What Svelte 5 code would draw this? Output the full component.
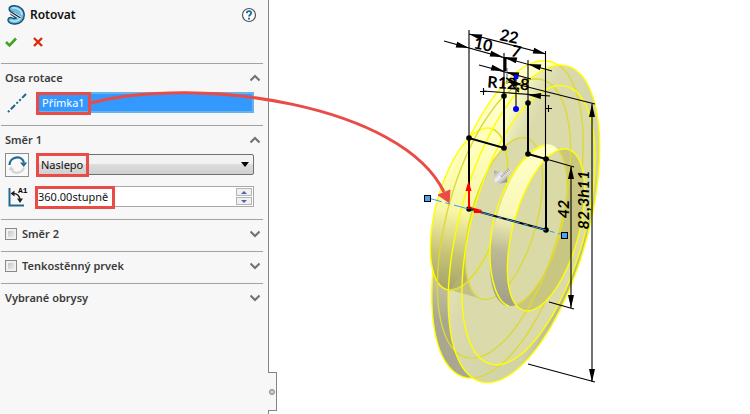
<script lang="ts">
    type Point = [number, number];

    let axisOpen = $state(true);
    let directionOpen = $state(true);
    let axisName = $state("Přímka1");
    let endCondition = $state("Naslepo");
    let angle = $state("360.00stupně");
    let secondDirection = $state(false);
    let thinFeature = $state(false);

    // point on the revolved part: a = distance along the axis, r = radius
    function project(a: number, r: number, t: number): Point {
        return [
            469 + 3.5 * a + 1.84 * r * Math.cos(t),
            209 + 0.95 * a - 1.857 * r * Math.cos(t) + 3.38 * r * Math.sin(t)
        ];
    }

    function ring(a: number, r: number) {
        const points: string[] = [];
        for (let i = 0; i < 120; i++) {
            const [x, y] = project(a, r, (i * Math.PI) / 60);
            points.push(`${x.toFixed(1)} ${y.toFixed(1)}`);
        }
        return "M" + points.join("L") + "Z";
    }

    const hubBack = ring(0, 21);
    const hubBackEnd = ring(10, 21);
    const rimBack = ring(11, 41.15);
    const rimFront = ring(15.7, 41.15);
    const discBack = ring(10, 36.2);
    const discFront = ring(17, 36.2);
    const hubFrontStart = ring(17, 21);
    const hubFront = ring(22, 21);

    const vertices: Point[] = [
        [504, 96], [528, 103], [469, 138], [504, 148],
        [528, 154], [546, 159], [546, 230], [469, 209]
    ];

    // tip x, tip y, direction in degrees
    const heads = [
        [469, 34, 195], [546, 54, 15],
        [469, 48, 15], [503, 57, 15], [504, 57, 195], [528, 64, 195],
        [504, 71, 15], [506, 72, 195], [528, 95, 184],
        [571, 166, -90], [571, 308, 90], [592, 104, -90], [592, 382, 90]
    ];
</script>

{#snippet chevron(open: boolean)}
    <svg class="chevron" viewBox="0 0 12 8" aria-hidden="true">
        <path d={open ? "M1.5 6.5 6 2l4.5 4.5" : "M1.5 1.5 6 6l4.5-4.5"} />
    </svg>
{/snippet}

<div class="app">
    <aside class="panel">
        <header>
            <svg class="logo" viewBox="0 0 20 20" aria-hidden="true">
                <path d="M3.2 4.5C2.6 2 5.3.8 8.3.8 14 .8 18.3 4.8 18.2 10.2c0 5.200-4 8.600-9 8.800-3.400.2-7-1.400-7.200-3.800-.1-2 1.800-3.200 3.800-2.300 1.600.700 3 .9 4.300.1L4.800 9.300C5 8 6 7.300 7.200 7.500 5.200 7.100 3.500 6 3.200 4.500Z" fill="#6db9df" stroke="#164f70" stroke-width="1.400" />
                <path d="M6 3c5-.8 9.800 2.200 10 7M4.500 15.300c4 1.800 8 .5 10-2.300" fill="none" stroke="#b5e4f7" stroke-width="1.600" />
                <path d="m4.800 7.400 10 5.800" stroke="#fff" stroke-width="2.600" />
                <path d="m5 7 9.500 6" stroke="#222" stroke-width="1.400" />
            </svg>
            <h1>Rotovat</h1>
            <button class="help" aria-label="Nápověda">
                <svg viewBox="0 0 16 16">
                    <circle cx="8" cy="8" r="6.500" fill="#fff" stroke="#4a5560" stroke-width="1.200" />
                    <path d="M5.800 6.200C5.800 3.300 10.200 3.400 10.200 6c0 1.700-2.200 1.700-2.200 3.600" fill="none" stroke="#1b6c99" stroke-width="1.800" />
                    <path d="M7 10.700h2v1.800H7z" fill="#1b6c99" />
                </svg>
            </button>
        </header>
        <div class="actions">
            <button aria-label="OK">
                <svg viewBox="0 0 12 12"><path d="m1 6 3.500 3.500L11 2.500" fill="none" stroke="#3fa51f" stroke-width="2.600" /></svg>
            </button>
            <button aria-label="Storno">
                <svg viewBox="0 0 12 12"><path d="m2 2 8 8M10 2l-8 8" fill="none" stroke="#d62d0a" stroke-width="2.400" /></svg>
            </button>
        </div>

        <section>
            <button class="heading" onclick={() => (axisOpen = !axisOpen)}>
                <span>Osa rotace</span>{@render chevron(axisOpen)}
            </button>
            {#if axisOpen}
                <div class="fields">
                    <div class="row">
                        <label class="icon" for="axis" aria-label="Osa rotace">
                            <svg viewBox="0 0 24 24"><path d="M3 21 21 3" stroke="#1c6689" stroke-width="2" stroke-dasharray="2 2 6 2 2 2" /></svg>
                        </label>
                        <input id="axis" class="axis" bind:value={axisName} />
                    </div>
                </div>
            {/if}
        </section>

        <section>
            <button class="heading" onclick={() => (directionOpen = !directionOpen)}>
                <span>Směr 1</span>{@render chevron(directionOpen)}
            </button>
            {#if directionOpen}
                <div class="fields">
                    <div class="row">
                        <button class="icon reverse" aria-label="Opačný směr">
                            <svg viewBox="0 0 22 22">
                                <path d="M3.500 11C3.500 2.500 15.500.5 18 8.500" fill="none" stroke="#236b91" stroke-width="2.200" />
                                <path d="M14 8.500h7.200L17.700 13Z" fill="#236b91" />
                                <path d="M18 13.500c-2 6-9.500 7-12.500 2.500" fill="none" stroke="#d4d4d4" stroke-width="2.200" />
                                <path d="M2.500 16h6L4.800 12Z" fill="#d4d4d4" />
                            </svg>
                        </button>
                        <div class="combo">
                            <select bind:value={endCondition} aria-label="Typ rotace">
                                <option>Naslepo</option>
                                <option>Do vrcholu</option>
                                <option>Do povrchu</option>
                            </select>
                            <svg viewBox="0 0 8 5" aria-hidden="true"><path d="M0 0h8L4 5Z" /></svg>
                        </div>
                    </div>
                    <div class="row">
                        <label class="icon" for="angle" aria-label="Úhel">
                            <svg viewBox="0 0 24 24">
                                <path d="M4.500 3v17.500H19" fill="none" stroke="#226a8c" stroke-width="2" />
                                <path d="M7 8.500c5-.5 8 2 8 7.500" fill="none" stroke="#222" stroke-width="1.600" />
                                <path d="m5.500 8.500 4-3v6ZM12 13.500h6L15 18Z" fill="#222" />
                                <text x="13" y="8">A1</text>
                            </svg>
                        </label>
                        <div class="spin">
                            <input id="angle" bind:value={angle} />
                            <div class="steps">
                                <button aria-label="Zvýšit"><svg viewBox="0 0 6 3"><path d="M0 3h6L3 0Z" /></svg></button>
                                <button aria-label="Snížit"><svg viewBox="0 0 6 3"><path d="M0 0h6L3 3Z" /></svg></button>
                            </div>
                        </div>
                    </div>
                </div>
            {/if}
        </section>

        <section>
            <div class="heading">
                <label><input type="checkbox" bind:checked={secondDirection} />Směr 2</label>
                {@render chevron(false)}
            </div>
        </section>
        <section>
            <div class="heading">
                <label><input type="checkbox" bind:checked={thinFeature} />Tenkostěnný prvek</label>
                {@render chevron(false)}
            </div>
        </section>
        <section>
            <button class="heading"><span>Vybrané obrysy</span>{@render chevron(false)}</button>
        </section>

        <button class="handle" aria-label="Skrýt panel"><i></i></button>
    </aside>

    <main></main>

    <svg class="scene" width="750" height="414" viewBox="0 0 750 414">
        <defs>
            <linearGradient id="side" gradientUnits="userSpaceOnUse" x1="500" y1="60" x2="455" y2="370">
                <stop offset="0" stop-color="#ffffd0" />
                <stop offset="0.400" stop-color="#ffffb8" />
                <stop offset="0.580" stop-color="#dfdd9c" />
                <stop offset="0.720" stop-color="#c6c4a2" />
                <stop offset="0.850" stop-color="#a9a78f" />
            </linearGradient>
            <linearGradient id="rim" gradientUnits="userSpaceOnUse" x1="450" y1="200" x2="590" y2="260">
                <stop offset="0" stop-color="#f0f0c0" />
                <stop offset="0.350" stop-color="#dadaae" />
                <stop offset="0.850" stop-color="#d2d2a8" />
                <stop offset="1" stop-color="#a9a78c" />
            </linearGradient>
            <linearGradient id="glow" gradientUnits="userSpaceOnUse" x1="475" y1="100" x2="545" y2="130">
                <stop offset="0" stop-color="#ffffc0" />
                <stop offset="0.500" stop-color="#fbfbc6" stop-opacity="0.900" />
                <stop offset="0.900" stop-color="#dadaae" stop-opacity="0" />
            </linearGradient>
            <linearGradient id="glowFade" x1="0" y1="0" x2="0" y2="1">
                <stop offset="0.250" stop-color="#fff" />
                <stop offset="0.480" stop-color="#000" />
            </linearGradient>
            <linearGradient id="hub" gradientUnits="userSpaceOnUse" x1="470" y1="150" x2="450" y2="290">
                <stop offset="0" stop-color="#ffffba" stop-opacity="0.800" />
                <stop offset="0.450" stop-color="#f8f6a4" />
                <stop offset="0.750" stop-color="#c6c376" />
                <stop offset="1" stop-color="#a5a36a" />
            </linearGradient>
            <linearGradient id="boss" gradientUnits="userSpaceOnUse" x1="540" y1="150" x2="505" y2="300">
                <stop offset="0" stop-color="#ffffc8" />
                <stop offset="0.450" stop-color="#faf8b8" />
                <stop offset="0.700" stop-color="#bcb994" />
                <stop offset="1" stop-color="#a3a18a" />
            </linearGradient>
            <linearGradient id="grip" x1="0" y1="0" x2="1" y2="1">
                <stop offset="0" stop-color="#9a9a9a" />
                <stop offset="0.450" stop-color="#f2f2f2" />
                <stop offset="1" stop-color="#777" />
            </linearGradient>
            <mask id="upper"><path d={rimFront} fill="url(#glowFade)" /></mask>
            <clipPath id="inRim"><path d={rimFront} /></clipPath>
            <clipPath id="inBoss"><path d={hubFront} /></clipPath>
        </defs>

        <path d={rimBack} fill="url(#side)" class="outline" />
        <path d={rimFront} fill="url(#rim)" />
        <path d={discFront} fill="#dadaab" />
        <path d={rimFront} fill="url(#glow)" mask="url(#upper)" />
        <path d={hubBack} fill="url(#hub)" />
        <path d="M450 290 486 300 504 280 475 255Z" fill="#b8b57c" opacity="0.700" />
        <path d={hubBackEnd} fill="#dadaab" />
        <path class="edge" d={hubBack} />
        <g class="edge hidden">
            <path d={hubBackEnd} />
            <path d={discBack} />
        </g>
        <g class="edge hidden" clip-path="url(#inRim)">
            <path d={hubBack} />
            <path d={rimBack} />
        </g>
        <path d={hubFrontStart} fill="url(#boss)" />
        <path d={hubFront} fill="#c9c681" />
        <path d={hubFrontStart} fill="#dadaa6" clip-path="url(#inBoss)" />
        <g class="edge hidden" clip-path="url(#inBoss)">
            <path d={hubFrontStart} />
            <path d={hubBackEnd} />
            <path d={discBack} />
        </g>
        <g class="edge">
            <path d={rimFront} />
            <path d={discFront} />
            <path d="M509 306C497 303 489 278 490 247 492 202 519 151 546 145" />
            <path d={hubFront} />
        </g>

        <g class="thin">
            <path d="M469 30V138M504 53V96M528 60V103M545.500 51V159M516 77V109" />
            <path d="M469 34 546 54M444 41 552 71M479 65 531 79M483 91 550 96" />
            <path d="M508 82 595 104M592 104V382M528 364 595 382" />
            <path d="M546 159 574 167M571 167V308M549 302 574 309" />
            <path d="M507 68V84" stroke="#777" />
            <path d="M480 91.500h7M483.500 88v7M545 108.500h7M548.500 105v7" />
            <path d="M505 57V71" stroke-width="3" />
            <path d="m506 78 9 4 5 2-7 2 6 6" fill="#000" />
        </g>
        {#each heads as [x, y, angle]}
            <path d="M0 0-13-3V3Z" transform="translate({x} {y}) rotate({angle})" />
        {/each}
        <path class="profile" d="M504 96V148L469 138V209L546 230V159L528 154V103" />
        {#each vertices as [x, y]}
            <circle cx={x} cy={y} r="2.800" />
        {/each}
        <circle cx="516" cy="77" r="2.500" fill="#00f" />
        <circle cx="516" cy="109" r="3" fill="#00f" />

        <g class="dims">
            <text transform="translate(508 42) rotate(12)">22</text>
            <text transform="translate(482 50) rotate(12)">10</text>
            <text transform="translate(515 57) rotate(12)">7</text>
            <text transform="translate(508 89) rotate(4)">R12,8</text>
            <g class="slanted">
                <text transform="translate(569 209) rotate(-90)">42</text>
                <text transform="translate(589 200) rotate(-90)">82,3h11</text>
            </g>
        </g>

        <path d="M428 198 564 235" stroke="#3d98ea" stroke-dasharray="14 4 5 4" fill="none" />
        <g fill="#4ba3f2" stroke="#000">
            <rect x="424.500" y="195.500" width="6" height="6" />
            <rect x="561.500" y="232.500" width="6" height="6" />
        </g>
        <g fill="#f00">
            <path d="M468 209V190h2v19ZM468.500 181l3 10h-6ZM469 208l12 3 1-1-12-3ZM483 213l-9-5v5Z" />
        </g>
        <!-- drag handle -->
        <path d="m494 170.500 7 1.500 6 2v8l-6 1.500-6-1Z" fill="url(#grip)" />
        <path d="m494.500 178 6-.5 8.500-9 2.500 1-7 10.500-4 2.500Z" fill="url(#grip)" />
        <path d="m501 176.500 9-8" stroke="#999" stroke-width="2.500" stroke-dasharray="1 1" />

        <g class="callouts">
            <rect x="37.500" y="93.500" width="52" height="20" />
            <rect x="37.500" y="154.500" width="50" height="21" />
            <rect x="36.500" y="187.500" width="77" height="20" />
            <path d="M91 103C200 75 402 105 444 192" />
            <path class="tip" d="m438 195 12-5-1 12.500Z" />
        </g>
    </svg>
</div>

<style>
    :global(body) {
        margin: 0;
        background: #fff;
    }

    .app {
        position: relative;
        display: flex;
        min-height: 100vh;
        overflow: hidden;
        font: 11px/16px "Noto Sans", "Open Sans", sans-serif;
        color: #111;
    }

    .panel {
        position: relative;
        box-sizing: border-box;
        flex: 0 0 269px;
        padding: 0 5px 0 1px;
        background: #f7f7f7;
        border-right: 1px solid #858585;
    }

    main {
        flex: 1;
    }

    button,
    input,
    select {
        box-sizing: border-box;
        margin: 0;
        font: inherit;
        color: inherit;
    }

    button {
        padding: 0;
        border: 0;
        background: none;
    }

    svg {
        display: block;
    }

    header {
        display: flex;
        align-items: center;
        gap: 4px;
        height: 30px;
        padding: 0 6px 0 5px;
    }

    .logo {
        width: 20px;
        height: 20px;
    }

    h1 {
        flex: 1;
        margin: 0;
        font-size: 12px;
        font-weight: 600;
    }

    .help svg {
        width: 16px;
        height: 16px;
    }

    .actions {
        display: flex;
        gap: 15px;
        height: 33px;
        padding: 0 4px;
        align-items: flex-start;
    }

    .actions button {
        padding-top: 6px;
    }

    .actions svg {
        width: 12px;
        height: 12px;
    }

    section {
        padding-bottom: 3px;
        border-top: 1px solid #a2a2a2;
    }

    .heading {
        display: flex;
        box-sizing: border-box;
        align-items: center;
        justify-content: space-between;
        width: 100%;
        height: 28px;
        padding: 0 2px 0 4px;
        font-weight: 600;
        color: #3c3c3c;
    }

    .heading label {
        display: flex;
        align-items: center;
        gap: 5px;
    }

    .chevron {
        width: 12px;
        height: 8px;
        fill: none;
        stroke: #707070;
        stroke-width: 2;
    }

    .heading input {
        appearance: none;
        width: 12px;
        height: 12px;
        border: 1px solid #8b8b8b;
        background: linear-gradient(135deg, #b9bfc8, #f4f4f4);
        box-shadow: inset 0 0 0 2px #f0f0f0;
    }

    .fields {
        display: grid;
        gap: 11px;
        padding: 0 9px 9px 4px;
    }

    .row {
        display: flex;
        align-items: center;
        gap: 8px;
        height: 21px;
    }

    .icon {
        flex: none;
        width: 24px;
        height: 24px;
    }

    .icon svg {
        width: 100%;
        height: 100%;
    }

    .icon text {
        font: 700 8px "Liberation Mono", monospace;
    }

    .reverse {
        border: 1px solid #8e8e8e;
        background: #f9f9f9;
    }

    .axis {
        flex: 1;
        min-width: 0;
        height: 21px;
        padding: 0 3px;
        border: 2px solid #63b4ec;
        outline: none;
        background: #3399ff;
        color: #fff;
    }

    .combo {
        position: relative;
        flex: 1;
    }

    .combo select {
        appearance: none;
        display: block;
        width: 100%;
        height: 21px;
        padding: 0 3px;
        border: 1px solid #707070;
        border-radius: 2px;
        background: linear-gradient(#f2f2f2 45%, #dddddd 50%, #cfcfcf);
    }

    .combo svg {
        position: absolute;
        right: 5px;
        top: 8px;
        width: 8px;
        height: 5px;
        pointer-events: none;
    }

    .spin {
        display: flex;
        box-sizing: border-box;
        flex: 1;
        min-width: 0;
        height: 21px;
        border: 1px solid #a8a8a8;
        background: #fff;
    }

    .spin input {
        flex: 1;
        min-width: 0;
        padding: 0;
        border: 0;
        outline: none;
        background: none;
    }

    .steps {
        display: grid;
        gap: 1px;
        width: 16px;
        padding: 1px;
    }

    .steps button {
        display: grid;
        place-items: center;
        border: 1px solid #b5b5b5;
        background: #f0f0f0;
    }

    .steps svg {
        width: 6px;
        height: 3px;
        fill: #4b64ab;
    }

    .handle {
        position: absolute;
        left: 268px;
        bottom: 3px;
        display: grid;
        place-items: center;
        width: 9px;
        height: 39px;
        border: 1px solid #858585;
        border-left: 0;
        background: #f7f7f7;
    }

    .handle i {
        box-sizing: border-box;
        width: 6px;
        height: 6px;
        border: 1px solid #858585;
        border-radius: 50%;
        background: #ccc;
    }

    .scene {
        position: absolute;
        left: 0;
        top: 0;
        pointer-events: none;
    }

    .outline {
        stroke: #ffff00;
        stroke-width: 1.4;
    }

    .edge {
        fill: none;
        stroke: #ffff00;
        stroke-width: 1.4;
    }

    .hidden {
        stroke: #dcd938;
    }

    .thin {
        fill: none;
        stroke: #000;
        stroke-width: 1.1;
    }

    .profile {
        fill: none;
        stroke: #000;
        stroke-width: 2;
    }

    .dims {
        font: 700 16px Lato, sans-serif;
        text-anchor: middle;
    }

    .slanted {
        font-style: italic;
    }

    .callouts {
        fill: none;
        stroke: #e94b46;
        stroke-width: 3;
    }

    .callouts .tip {
        fill: #e94b46;
        stroke-width: 1;
    }
</style>
